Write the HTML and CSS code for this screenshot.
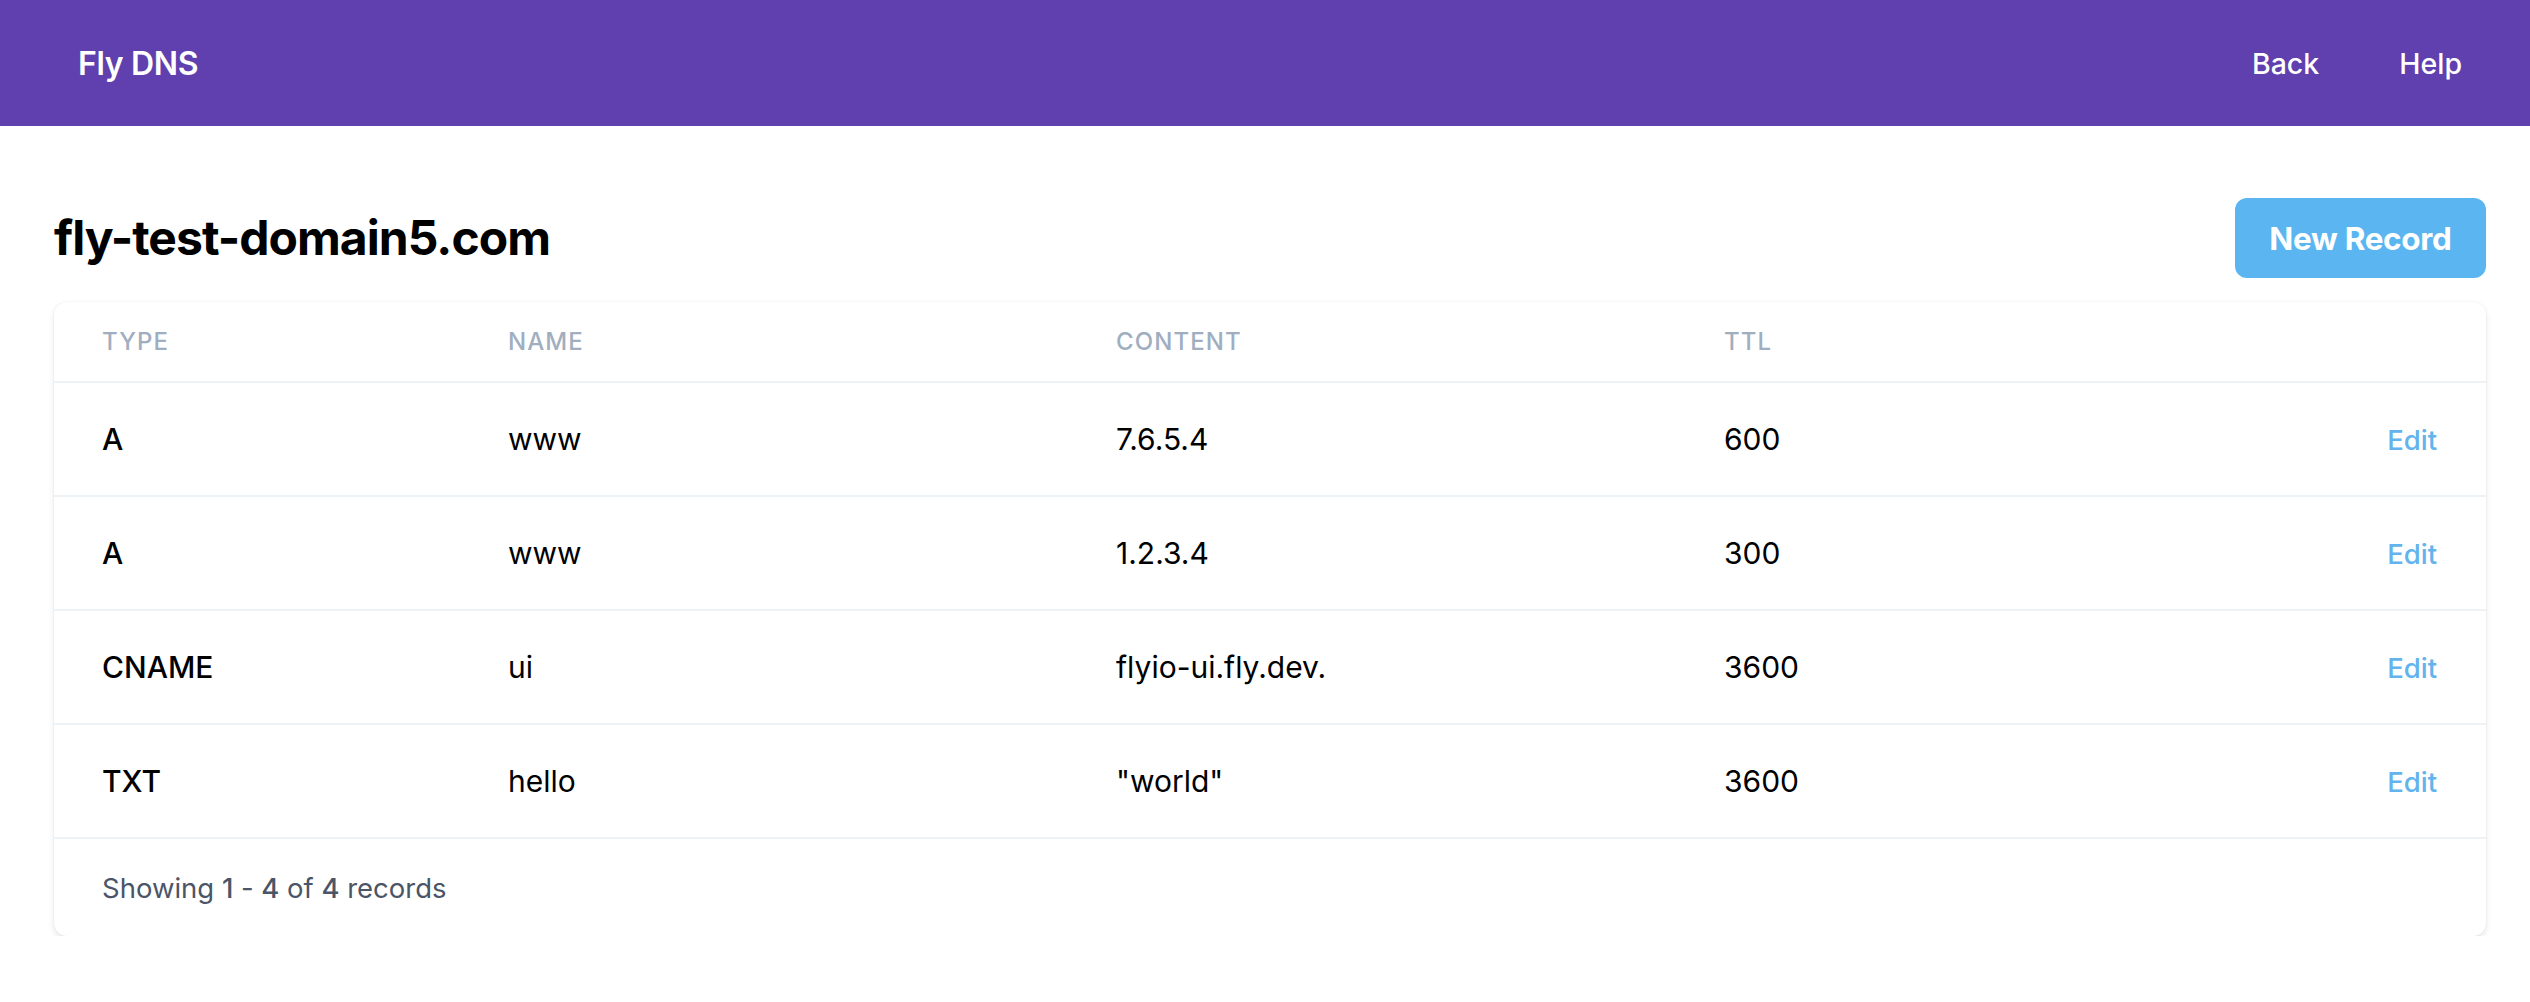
FILE: index.html
```html
<!DOCTYPE html>
<html lang="en">
<head>
<meta charset="utf-8">
<title>Fly DNS</title>
<link rel="stylesheet" href="styles.css">
</head>
<body>
  <header class="topbar">
    <div class="brand">Fly DNS</div>
    <nav class="nav">
      <a class="nav-link" href="#">Back</a>
      <a class="nav-link" href="#">Help</a>
    </nav>
  </header>
  <main class="page">
    <div class="title-row">
      <h1 class="title">fly-test-domain5.com</h1>
      <button class="btn-primary">New Record</button>
    </div>
    <section class="card">
      <div class="row head">
        <div class="cell">Type</div>
        <div class="cell">Name</div>
        <div class="cell">Content</div>
        <div class="cell">TTL</div>
        <div class="cell"></div>
      </div>
      <div class="row">
        <div class="cell type">A</div>
        <div class="cell">www</div>
        <div class="cell">7.6.5.4</div>
        <div class="cell">600</div>
        <div class="cell action"><a href="#" class="edit">Edit</a></div>
      </div>
      <div class="row">
        <div class="cell type">A</div>
        <div class="cell">www</div>
        <div class="cell">1.2.3.4</div>
        <div class="cell">300</div>
        <div class="cell action"><a href="#" class="edit">Edit</a></div>
      </div>
      <div class="row">
        <div class="cell type">CNAME</div>
        <div class="cell">ui</div>
        <div class="cell">flyio-ui.fly.dev.</div>
        <div class="cell">3600</div>
        <div class="cell action"><a href="#" class="edit">Edit</a></div>
      </div>
      <div class="row">
        <div class="cell type">TXT</div>
        <div class="cell">hello</div>
        <div class="cell">"world"</div>
        <div class="cell">3600</div>
        <div class="cell action"><a href="#" class="edit">Edit</a></div>
      </div>
      <div class="footer">
        Showing <span class="strong">1</span> - <span class="strong">4</span> of <span class="strong">4</span> records
      </div>
    </section>
  </main>
</body>
</html>
```

FILE: styles.css
```css
* { box-sizing: border-box; }

html, body {
  margin: 0;
  padding: 0;
  background: #ffffff;
  font-family: Inter, "Noto Sans", "Liberation Sans", sans-serif;
  color: #000;
}

.topbar {
  height: 126px;
  background: #5f40ae;
  display: flex;
  align-items: center;
  justify-content: space-between;
  padding: 0 68px 0 78px;
}

.brand {
  color: #fff;
  font-size: 32px;
  font-weight: 600;
  letter-spacing: -0.01em;
}

.nav {
  display: flex;
  gap: 80px;
}

.nav-link {
  color: #fff;
  text-decoration: none;
  font-size: 28.5px;
  font-weight: 500;
}

.page {
  padding: 72px 44px 0 54px;
}

.title-row {
  display: flex;
  align-items: center;
  justify-content: space-between;
  height: 80px;
  margin-bottom: 24px;
}

.title {
  margin: 0;
  font-size: 48px;
  font-weight: 700;
  letter-spacing: -0.02em;
  line-height: 1;
}

.btn-primary {
  height: 80px;
  width: 251px;
  border: none;
  border-radius: 12px;
  background: #5bb5f0;
  color: #fff;
  font-family: inherit;
  font-size: 31.5px;
  font-weight: 700;
  letter-spacing: -0.01em;
  padding: 0;
}

.card {
  background: #fff;
  border-radius: 13px;
  box-shadow: 0 3px 6px rgba(0, 0, 0, 0.1), 0 0 2px rgba(0, 0, 0, 0.07);
  overflow: hidden;
}

.row {
  display: grid;
  grid-template-columns: 406px 608px 608px 1fr auto;
  align-items: center;
  height: 114px;
  padding: 0 49px 0 48px;
  border-bottom: 2px solid #edf2f7;
  font-size: 30px;
}

.row.head {
  height: 81px;
  font-size: 24px;
  font-weight: 500;
  text-transform: uppercase;
  letter-spacing: 0.045em;
  color: #a0aec0;
}

.cell.type {
  font-weight: 500;
}

.action {
  text-align: right;
}

.edit {
  color: #63b3ed;
  text-decoration: none;
  font-size: 27.5px;
  font-weight: 500;
}

.footer {
  height: 97px;
  display: flex;
  align-items: center;
  gap: 0.28em;
  padding: 0 48px;
  font-size: 27.5px;
  color: #4a5568;
}

.footer .strong {
  font-weight: 500;
  color: #4a5568;
}
```
